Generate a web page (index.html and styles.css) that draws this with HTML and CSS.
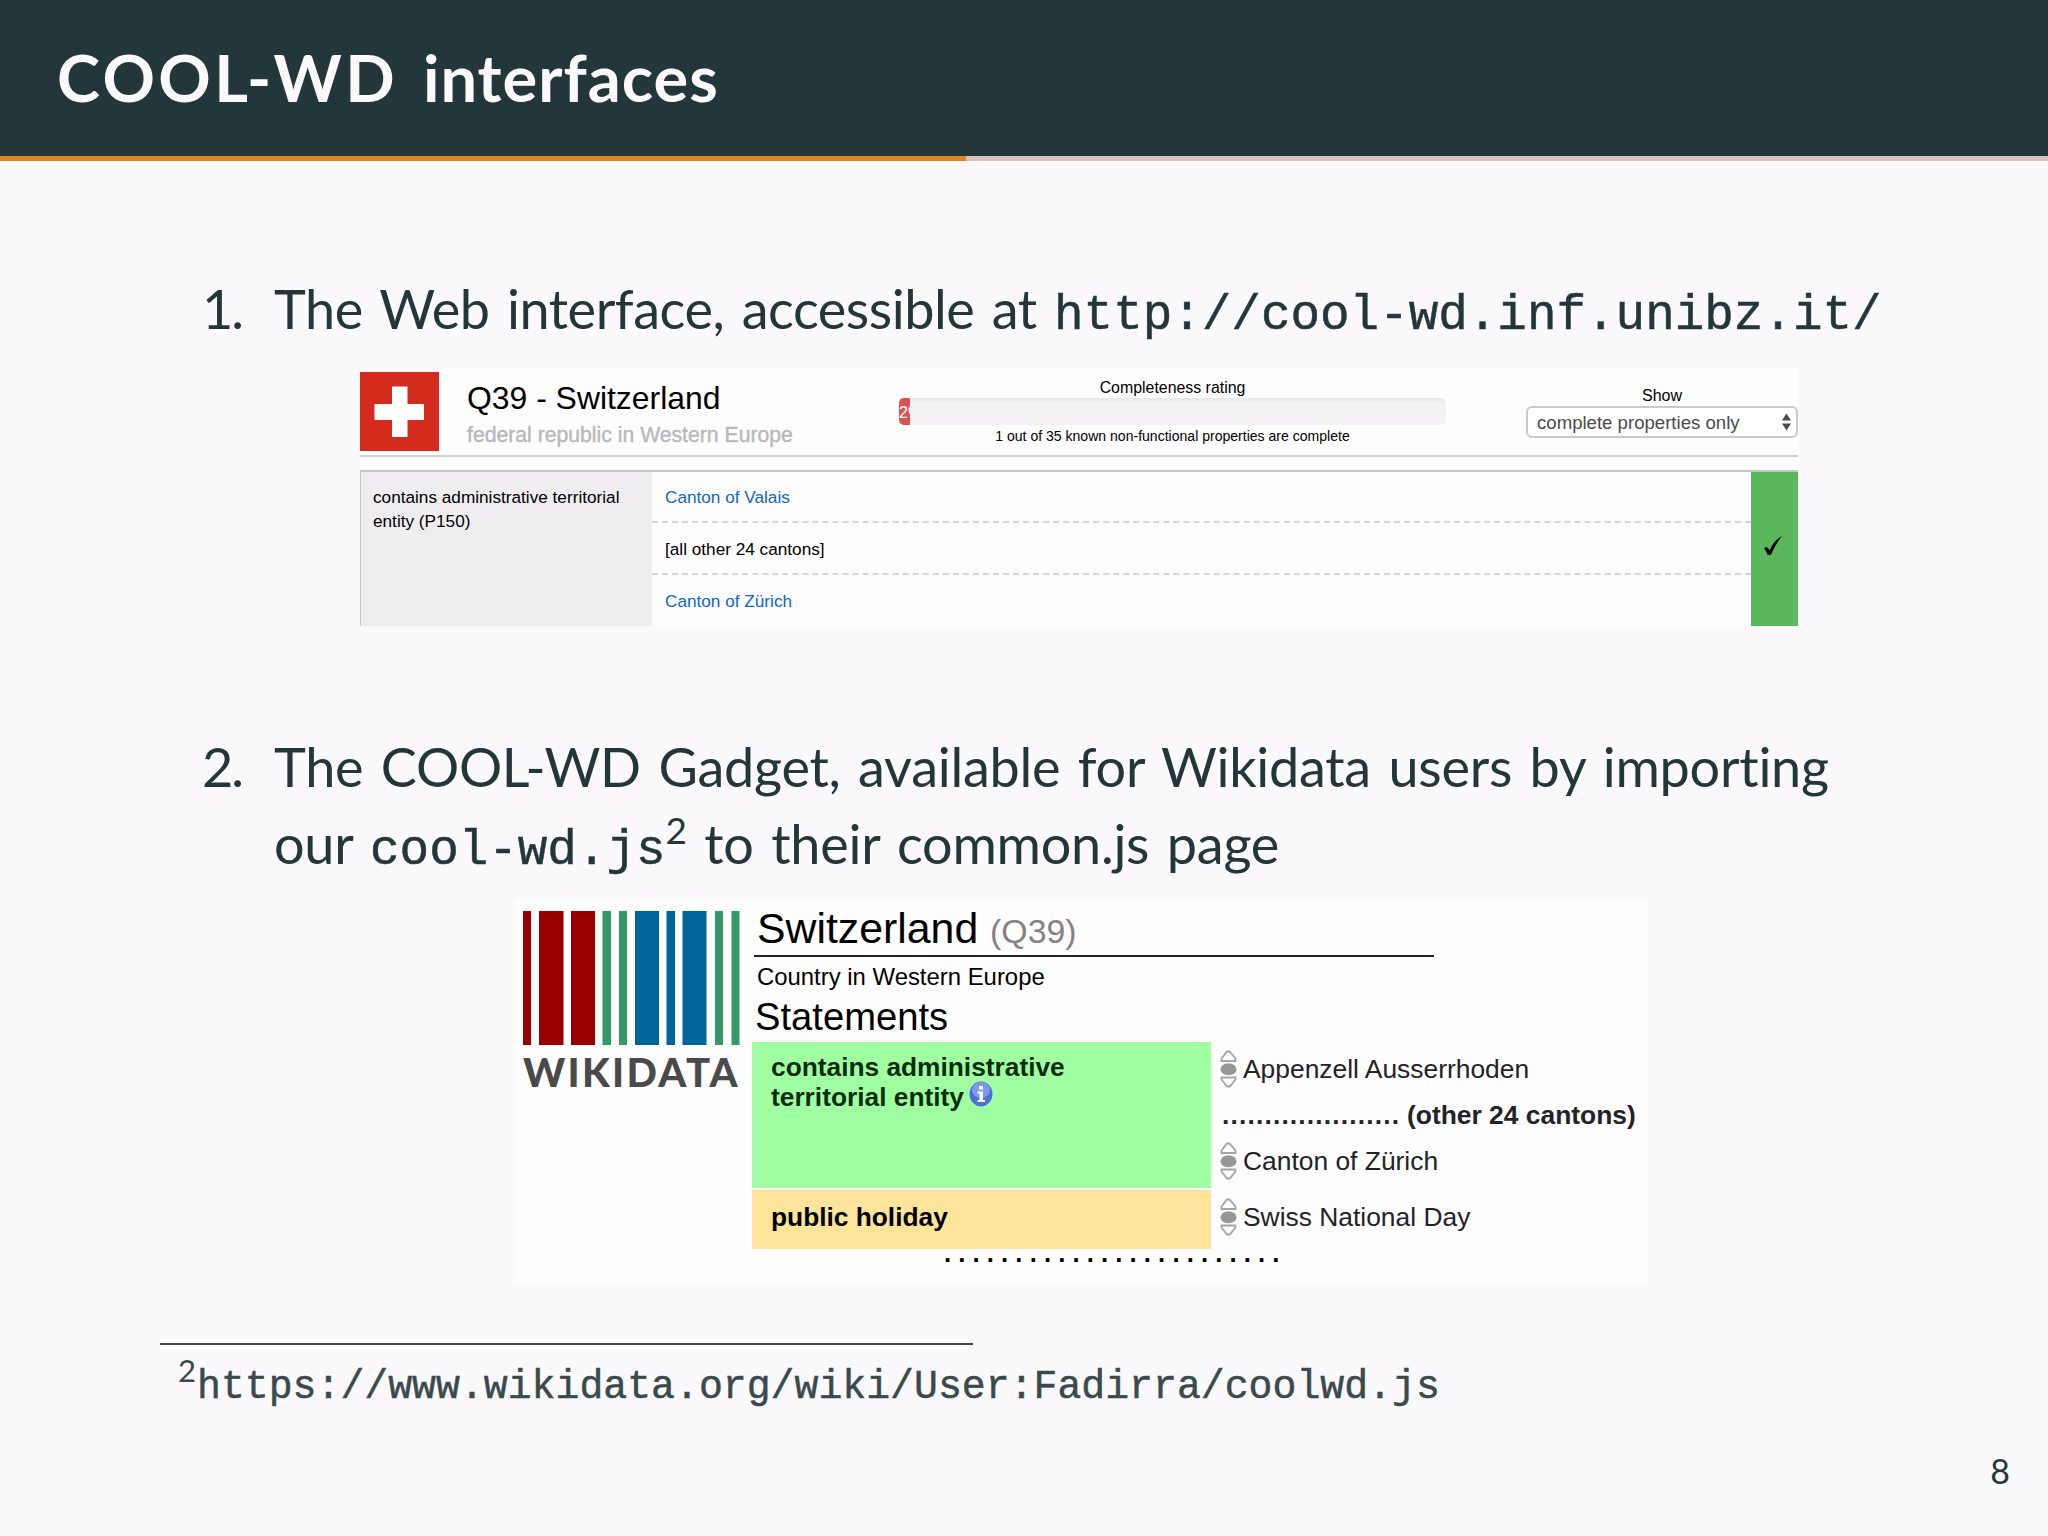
FILE: index.html
```
<!DOCTYPE html>
<html lang="en">
<head>
    <meta charset="UTF-8">
    <meta name="viewport" content="width=device-width, initial-scale=1.0">
    <title>COOL-WD interfaces</title>
    <link rel="stylesheet" href="styles.css">
</head>
<body>
    <header class="slide-header">
        <h1><span class="caps">COOL-WD</span> interfaces</h1>
    </header>
    <div class="progress"><div class="progress-done"></div></div>

    <ol class="items">
        <li class="item">
            <span class="number">1.</span>
            <div class="item-body">
                <p>The Web interface, accessible at <code>http://cool-wd.inf.unibz.it/</code></p>

                <div class="web-ui">
                    <div class="entity">
                        <svg class="flag" viewBox="0 0 79 79">
                            <rect width="79" height="79" fill="#d52b1e"/>
                            <path d="M32 14.500h15.500v17.500H64v16H47.500v17H32V48H14.500V32H32z" fill="#fff"/>
                        </svg>
                        <div class="entity-name">
                            <h2>Q39 - Switzerland</h2>
                            <div class="entity-desc">federal republic in Western Europe</div>
                        </div>
                        <div class="rating">
                            <div class="rating-title">Completeness rating</div>
                            <div class="rating-bar"><div class="rating-value">2%</div></div>
                            <div class="rating-note">1 out of 35 known non-functional properties are complete</div>
                        </div>
                        <div class="filter">
                            <div class="filter-title">Show</div>
                            <div class="select">
                                <span>complete properties only</span>
                                <svg width="9" height="18" viewBox="0 0 9 18"><path d="M0 7.5L4.500 0.500L9 7.500zM0 10.500h9L4.500 17.500z" fill="#4c4a4e"/></svg>
                            </div>
                        </div>
                    </div>
                    <div class="property">
                        <div class="property-name">contains administrative territorial<br>entity (P150)</div>
                        <div class="property-values">
                            <div class="value link">Canton of Valais</div>
                            <div class="value">[all other 24 cantons]</div>
                            <div class="value link">Canton of Zürich</div>
                        </div>
                        <div class="complete">
                            <svg width="20" height="22" viewBox="0 0 20 22"><path d="M1 13.500C2 12 4.500 12 5.200 13.200L6.600 15.500C9 9.500 13 4 19 1.300C15 6 11 12.500 8.600 18.800C7.800 20.500 5 20.600 4.200 19C3.500 17 2.500 15 1 13.500z"/></svg>
                        </div>
                    </div>
                </div>
            </div>
        </li>
        <li class="item item-gadget">
            <span class="number">2.</span>
            <div class="item-body">
                <p>The COOL-WD Gadget, available for Wikidata users by importing<br>
                our <code>cool-wd.js</code><sup>2</sup> to their common.js page</p>

                <div class="gadget">
                    <div class="logo">
                        <svg width="217" height="134" viewBox="0 0 217 134">
                            <path d="M0 0h8v134H0zM16 0h24.500v134H16zM48 0h24v134H48z" fill="#990000"/>
                            <path d="M79.500 0h8.500v134h-8.500zM96 0h8v134h-8zM192 0h8v134h-8zM208.500 0h8v134h-8z" fill="#339966"/>
                            <path d="M112 0h24v134h-24zM143.500 0h8.500v134h-8.500zM159.500 0h24v134h-24z" fill="#006699"/>
                        </svg>
                        <div class="logo-text">WIKIDATA</div>
                    </div>
                    <div class="page">
                        <div class="page-title">Switzerland <span class="qid">(Q39)</span></div>
                        <div class="page-desc">Country in Western Europe</div>
                        <div class="page-section">Statements</div>
                        <div class="statement">
                            <div class="claim claim-complete">contains administrative<br>territorial entity
                                <svg class="info" viewBox="0 0 24 26">
                                    <ellipse cx="12" cy="13" rx="11.500" ry="12.500" fill="#4f6fd8"/>
                                    <ellipse cx="12" cy="9" rx="9" ry="8" fill="#8098ea"/>
                                    <path d="M10 5h4v3.500h-4zM8.500 10.500H14V19h2v2H8.500v-2h2v-6.500h-2z" fill="#fff"/>
                                </svg>
                            </div>
                            <div class="claim-values">
                                <div class="claim-value"><svg class="rank" viewBox="0 0 17 38"><use href="#rank"/></svg>Appenzell Ausserrhoden</div>
                                <div class="claim-value others"><span class="dots">.....................</span>(other 24 cantons)</div>
                                <div class="claim-value"><svg class="rank" viewBox="0 0 17 38"><use href="#rank"/></svg>Canton of Zürich</div>
                            </div>
                        </div>
                        <div class="statement statement-last">
                            <div class="claim claim-unknown">public holiday</div>
                            <div class="claim-values">
                                <div class="claim-value"><svg class="rank" viewBox="0 0 17 38"><use href="#rank"/></svg>Swiss National Day</div>
                            </div>
                        </div>
                        <div class="more">. . . . . . . . . . . . . . . . . . . . . . . .</div>
                    </div>
                </div>
            </div>
        </li>
    </ol>

    <footer class="footnote"><sup>2</sup><code>https://www.wikidata.org/wiki/User:Fadirra/coolwd.js</code></footer>
    <div class="page-number">8</div>

    <svg class="defs">
        <g id="rank">
            <path d="M7 1.500h2.500L15.500 8.500v2.500H1.500V8.500zM1.500 27.500h14v2L9.800 36.500H7L1.500 29.500z" fill="none" stroke="#a4a4a4" stroke-width="1.800"/>
            <ellipse cx="8.500" cy="19.200" rx="8" ry="6" fill="#969696"/>
        </g>
    </svg>
</body>
</html>
```
FILE: styles.css
```
body {
    margin: 0;
    width: 2048px;
    height: 1536px;
    overflow: hidden;
    position: relative;
    background: #fbf9fc;
    color: #23373b;
    font-family: Lato, sans-serif;
}
h1, h2, p, ol {
    margin: 0;
    padding: 0;
    font-weight: normal;
}
code {
    font-family: "Liberation Mono", monospace;
    line-height: 0;
    letter-spacing: 0;
    -webkit-text-stroke: 0.5px;
}
sup {
    line-height: 0;
    vertical-align: baseline;
    position: relative;
}
.defs {
    display: none;
}

/* Slide header */
.slide-header {
    height: 156px;
    padding-left: 57px;
    background: #23373b;
    color: #fbf9fc;
}
.slide-header h1 {
    font-size: 65px;
    font-weight: bold;
    line-height: 155px;
    letter-spacing: 1px;
    word-spacing: 8px;
}
.caps {
    letter-spacing: 3.400px;
}
.progress {
    height: 5px;
    background: #d8c2bb;
}
.progress-done {
    width: 966px;
    height: 5px;
    background: #e08420;
}

/* Numbered items */
.items {
    list-style: none;
    padding: 109px 0 0 202px;
}
.item {
    display: grid;
    grid-template-columns: 72px 1fr;
    font-size: 54px;
    line-height: 77px;
    letter-spacing: -0.450px;
    word-spacing: 4px;
    white-space: nowrap;
}
.item-gadget {
    margin-top: 102px;
    letter-spacing: -0.260px;
}
.number {
    letter-spacing: -2px;
}
.item code {
    font-size: 49.250px;
}
.item sup {
    font-size: 37px;
    top: -20px;
}

/* Web interface */
.web-ui {
    width: 1438px;
    height: 258px;
    margin: 21px 0 0 86px;
    background: #fefdfe;
    color: #000;
    font-family: "Liberation Sans", Arial, sans-serif;
    letter-spacing: 0;
    word-spacing: 0;
}
.entity {
    display: flex;
    height: 87px;
    border-bottom: 2px solid #d2d0d4;
}
.flag {
    width: 79px;
    height: 79px;
    margin-top: 4px;
}
.entity-name {
    width: 432px;
    padding: 10px 0 0 28px;
}
.entity-name h2 {
    font-size: 31.900px;
    line-height: 40px;
}
.entity-desc {
    font-size: 21.200px;
    line-height: 34px;
    color: #b9b8ba;
    -webkit-text-stroke: 0.4px;
}
.rating {
    width: 547px;
    padding-top: 9px;
    text-align: center;
}
.rating-title {
    font-size: 15.900px;
    line-height: 21px;
}
.rating-bar {
    height: 27px;
    border-radius: 5px;
    background: linear-gradient(#e9e7ea, #f4f2f5 5px);
    overflow: hidden;
}
.rating-value {
    width: 11px;
    height: 27px;
    overflow: hidden;
    background: #d9534f;
    color: #fff;
    font-size: 16px;
    line-height: 29px;
    text-align: left;
}
.rating-note {
    font-size: 14.050px;
    line-height: 22px;
}
.filter {
    width: 272px;
    margin-left: 80px;
    padding-top: 17px;
    text-align: center;
}
.filter-title {
    font-size: 16px;
    line-height: 21px;
}
.select {
    display: flex;
    justify-content: space-between;
    align-items: center;
    height: 28px;
    padding: 0 5px 0 9px;
    border: 2px solid #cbc9cd;
    border-radius: 6px;
    background: #fff;
    color: #4c4a4e;
    font-size: 18.600px;
    line-height: 29px;
}
.property {
    display: flex;
    height: 154px;
    margin-top: 13px;
    border-top: 2px solid #c8c6ca;
    font-size: 17.200px;
}
.property-name {
    box-sizing: border-box;
    width: 292px;
    padding: 13px 0 0 12px;
    border-left: 1px solid #c8c6ca;
    background: #efedf0;
    line-height: 24px;
}
.property-values {
    width: 1099px;
}
.value {
    height: 50px;
    padding-left: 13px;
    border-bottom: 2px dashed #d8d6da;
    line-height: 52px;
}
.value:first-child {
    height: 49px;
    line-height: 51px;
}
.value:last-child {
    border-bottom: none;
}
.link {
    color: #0b68c8;
}
.complete {
    box-sizing: border-box;
    display: flex;
    align-items: center;
    justify-content: center;
    width: 47px;
    padding: 0 3px 6px 0;
    background: #5cb85c;
}

/* Wikidata gadget */
.gadget {
    display: flex;
    width: 1133px;
    height: 385px;
    margin: 17px 0 0 241px;
    background: #fefdfe;
    color: #000;
    font-family: "Liberation Sans", Arial, sans-serif;
    letter-spacing: 0;
    word-spacing: 0;
}
.logo {
    width: 229px;
    padding: 12px 0 0 8px;
}
.logo svg {
    display: block;
}
.logo-text {
    margin-top: 4px;
    color: #4a4a4a;
    font-family: Lato, sans-serif;
    font-size: 40px;
    font-weight: 900;
    line-height: 46px;
    letter-spacing: 2.300px;
}
.page {
    flex: 1;
}
.page-title {
    width: 677px;
    height: 56px;
    margin-left: 2px;
    padding-left: 3px;
    border-bottom: 2px solid #2a2226;
    font-size: 42.800px;
    line-height: 59px;
}
.qid {
    color: #848284;
    font-size: 33.800px;
}
.page-desc {
    padding-left: 5px;
    font-size: 23.900px;
    line-height: 39px;
}
.page-section {
    height: 46px;
    padding-left: 3px;
    font-size: 38.200px;
    line-height: 42px;
}
.statement {
    display: flex;
    height: 146px;
}
.statement-last {
    height: 59px;
    margin-top: 2px;
}
.claim {
    box-sizing: border-box;
    width: 459px;
    padding: 10px 0 0 19px;
    font-size: 26.300px;
    font-weight: bold;
    line-height: 30px;
}
.claim-complete {
    background: #a0ffa0;
    color: #0c2c10;
}
.claim-unknown {
    background: #fce49a;
    padding-top: 12px;
}
.info {
    width: 24px;
    height: 26px;
    margin: -4px 0 0 -2px;
    vertical-align: -1px;
}
.claim-values {
    padding: 4px 0 0 9px;
    color: #242226;
    font-size: 26.400px;
    line-height: 46px;
}
.claim-value {
    display: flex;
    height: 46px;
}
.rank {
    width: 17px;
    height: 38px;
    margin: 4px 6px 0 0;
}
.others {
    font-weight: bold;
}
.dots {
    width: 185px;
    padding-left: 2px;
    letter-spacing: 1.150px;
}
.more {
    padding-left: 192px;
    font-size: 25.700px;
    font-weight: bold;
    line-height: 8px;
}

/* Footnote */
.footnote {
    width: 813px;
    margin: 59px 0 0 160px;
    padding-left: 18px;
    box-sizing: border-box;
    border-top: 2px solid #45484a;
    color: #3a4a4c;
    font-size: 40px;
    line-height: 77px;
    white-space: nowrap;
}
.footnote code {
    margin-left: 1px;
    font-size: 39.850px;
}
.footnote sup {
    font-size: 31px;
    top: -16px;
}
.page-number {
    position: absolute;
    right: 38px;
    bottom: 40px;
    font-size: 34px;
    line-height: 50px;
}
```
